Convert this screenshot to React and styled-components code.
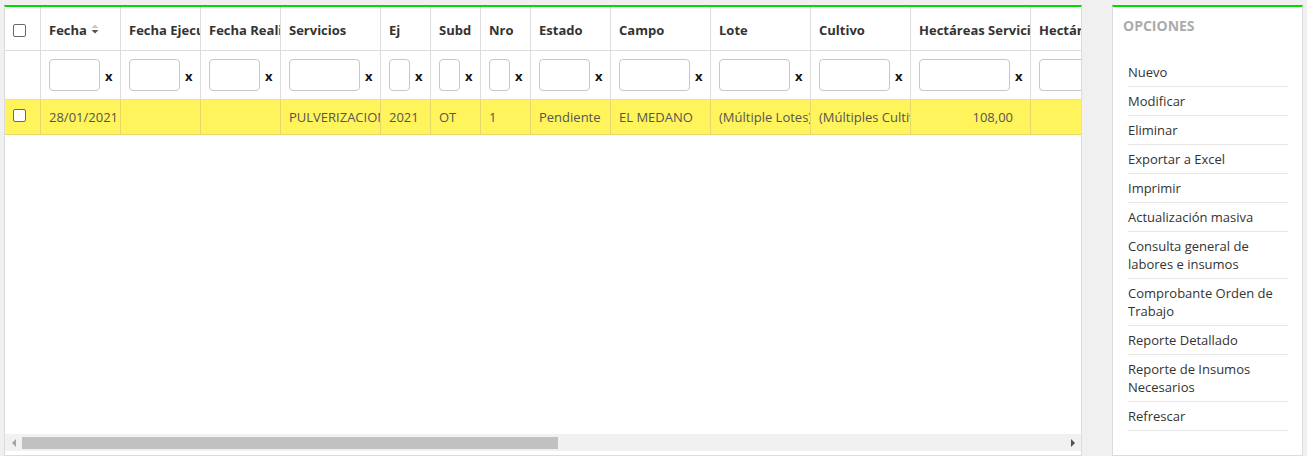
import React from "react";
import styled, { createGlobalStyle } from "styled-components";

const GlobalStyle = createGlobalStyle`
  html, body {
    margin: 0;
    padding: 0;
    background: #f0f0f0;
    font-family: 'Open Sans', 'Liberation Sans', sans-serif;
    font-size: 13px;
    color: #333;
  }
  * { box-sizing: border-box; }
`;

const columns = [
  { key: "sel", width: 36 },
  { key: "fecha", title: "Fecha", width: 80, sort: true, value: "28/01/2021" },
  { key: "fechaEjec", title: "Fecha Ejecución", width: 80 },
  { key: "fechaReal", title: "Fecha Realización", width: 80 },
  { key: "servicios", title: "Servicios", width: 100, value: "PULVERIZACION" },
  { key: "ej", title: "Ej", width: 50, value: "2021" },
  { key: "subd", title: "Subd", width: 50, value: "OT" },
  { key: "nro", title: "Nro", width: 50, value: "1" },
  { key: "estado", title: "Estado", width: 80, value: "Pendiente" },
  { key: "campo", title: "Campo", width: 100, value: "EL MEDANO" },
  { key: "lote", title: "Lote", width: 100, value: "(Múltiple Lotes)" },
  { key: "cultivo", title: "Cultivo", width: 100, value: "(Múltiples Cultivos)" },
  { key: "hasServ", title: "Hectáreas Servicio", width: 120, value: "108,00", right: true },
  { key: "hasReal", title: "Hectáreas Realizadas", width: 120 },
];

const template = columns.map((c) => `${c.width}px`).join(" ");

const options = [
  "Nuevo",
  "Modificar",
  "Eliminar",
  "Exportar a Excel",
  "Imprimir",
  "Actualización masiva",
  "Consulta general de labores e insumos",
  "Comprobante Orden de Trabajo",
  "Reporte Detallado",
  "Reporte de Insumos Necesarios",
  "Refrescar",
];

const Page = styled.div`
  display: flex;
  gap: 30px;
  height: 456px;
  padding: 5px 4px 0 4px;
`;

const GridPanel = styled.div`
  flex: 1;
  min-width: 0;
  height: 451px;
  display: flex;
  flex-direction: column;
  background: #fff;
  border: 1px solid #dcdcdc;
  border-top: 2px solid #00dc00;
  padding-bottom: 4px;
`;

const TableArea = styled.div`
  flex: 1;
  overflow: hidden;
`;

const Row = styled.div`
  display: grid;
  grid-template-columns: ${template};
  width: max-content;
  height: ${(p) => p.$height}px;
  background: ${(p) => (p.$selected ? "#fff45c" : "#fff")};
`;

const Cell = styled.div`
  display: flex;
  align-items: ${(p) => p.$align || "center"};
  justify-content: ${(p) => (p.$right ? "flex-end" : "flex-start")};
  padding: ${(p) => p.$pad || "0 8px"};
  border-right: 1px solid ${(p) => (p.$selected ? "#e4da6a" : "#dddddd")};
  border-bottom: 1px solid ${(p) => (p.$selected ? "#e4da6a" : "#dddddd")};
  overflow: hidden;
  white-space: nowrap;
  min-width: 0;
`;

const HeadText = styled.span`
  font-weight: 700;
  color: #333;
  padding-top: 3px;
`;

const DataText = styled.span`
  color: #555;
`;

const SortIcon = styled.svg`
  flex: none;
  margin-left: 4px;
  margin-top: 1px;
`;

const Check = styled.span`
  flex: none;
  display: block;
  width: 13px;
  height: 13px;
  border: 1px solid #6a6a6a;
  border-radius: 2px;
  background: #fff;
  margin-top: ${(p) => p.$top || 0}px;
`;

const FilterInput = styled.input`
  flex: 1;
  min-width: 0;
  height: 32px;
  border: 1px solid #c8c8c8;
  border-radius: 4px;
  padding: 0 6px;
  font: inherit;
  outline: none;
`;

const Clear = styled.span`
  flex: none;
  margin-left: 5px;
  font-weight: 700;
  color: #111;
  font-size: 13px;
  width: 8px;
  line-height: 1;
  padding-top: 2px;
`;

const ScrollBar = styled.div`
  flex: none;
  height: 17px;
  display: flex;
  align-items: center;
  background: #f1f1f1;
`;

const ScrollArrow = styled.span`
  flex: none;
  width: 17px;
  height: 17px;
  display: flex;
  align-items: center;
  justify-content: center;
  &::before {
    content: "";
    width: 0;
    height: 0;
    border-top: 4px solid transparent;
    border-bottom: 4px solid transparent;
    ${(p) =>
      p.$dir === "left"
        ? "border-right: 4px solid #a3a3a3;"
        : "border-left: 4px solid #505050;"}
  }
`;

const ScrollTrack = styled.div`
  flex: 1;
  height: 17px;
  display: flex;
  align-items: center;
`;

const ScrollThumb = styled.div`
  height: 12px;
  background: #c1c1c1;
`;

const SidePanel = styled.aside`
  flex: none;
  width: 191px;
  height: 451px;
  background: #fff;
  border: 1px solid #dcdcdc;
  border-top: 2px solid #00dc00;
  padding: 0 14px 0 15px;
`;

const SideTitle = styled.h3`
  margin: 9px 0 22px -5px;
  font-size: 14px;
  line-height: 20px;
  font-weight: 700;
  color: #ababab;
  text-transform: uppercase;
`;

const OptionList = styled.ul`
  list-style: none;
  margin: 0;
  padding: 0;
`;

const OptionItem = styled.li`
  padding: 5px 0;
  line-height: 18px;
  font-size: 13px;
  color: #333;
  border-bottom: 1px solid #e6e6e6;
  cursor: pointer;
`;

function HeaderRow() {
  return (
    <Row $height={44}>
      {columns.map((c) =>
        c.key === "sel" ? (
          <Cell key={c.key} $pad="4px 8px 0">
            <Check />
          </Cell>
        ) : (
          <Cell key={c.key}>
            <HeadText>{c.title}</HeadText>
            {c.sort && (
              <SortIcon width="8" height="12" viewBox="0 0 8 12">
                <polygon points="0.5,5 4,1.5 7.5,5" fill="#c6c6c6" />
                <polygon points="0.5,7 7.5,7 4,10.5" fill="#555" />
              </SortIcon>
            )}
          </Cell>
        )
      )}
    </Row>
  );
}

function FilterRow() {
  return (
    <Row $height={49}>
      {columns.map((c) =>
        c.key === "sel" ? (
          <Cell key={c.key} />
        ) : (
          <Cell key={c.key} $pad="0 7px 0 8px">
            <FilterInput type="text" />
            <Clear>x</Clear>
          </Cell>
        )
      )}
    </Row>
  );
}

function DataRow() {
  return (
    <Row $height={35} $selected>
      {columns.map((c) =>
        c.key === "sel" ? (
          <Cell key={c.key} $selected $align="flex-start" $pad="0 8px">
            <Check $top={9} />
          </Cell>
        ) : (
          <Cell key={c.key} $selected $right={c.right} $pad={c.right ? "0 17px 0 8px" : "0 8px"}>
            <DataText>{c.value || ""}</DataText>
          </Cell>
        )
      )}
    </Row>
  );
}

export default function App() {
  return (
    <>
      <GlobalStyle />
      <Page>
        <GridPanel>
          <TableArea>
            <HeaderRow />
            <FilterRow />
            <DataRow />
          </TableArea>
          <ScrollBar>
            <ScrollArrow $dir="left" />
            <ScrollTrack>
              <ScrollThumb style={{ width: "51.4%" }} />
            </ScrollTrack>
            <ScrollArrow $dir="right" />
          </ScrollBar>
        </GridPanel>
        <SidePanel>
          <SideTitle>Opciones</SideTitle>
          <OptionList>
            {options.map((o) => (
              <OptionItem key={o}>{o}</OptionItem>
            ))}
          </OptionList>
        </SidePanel>
      </Page>
    </>
  );
}
